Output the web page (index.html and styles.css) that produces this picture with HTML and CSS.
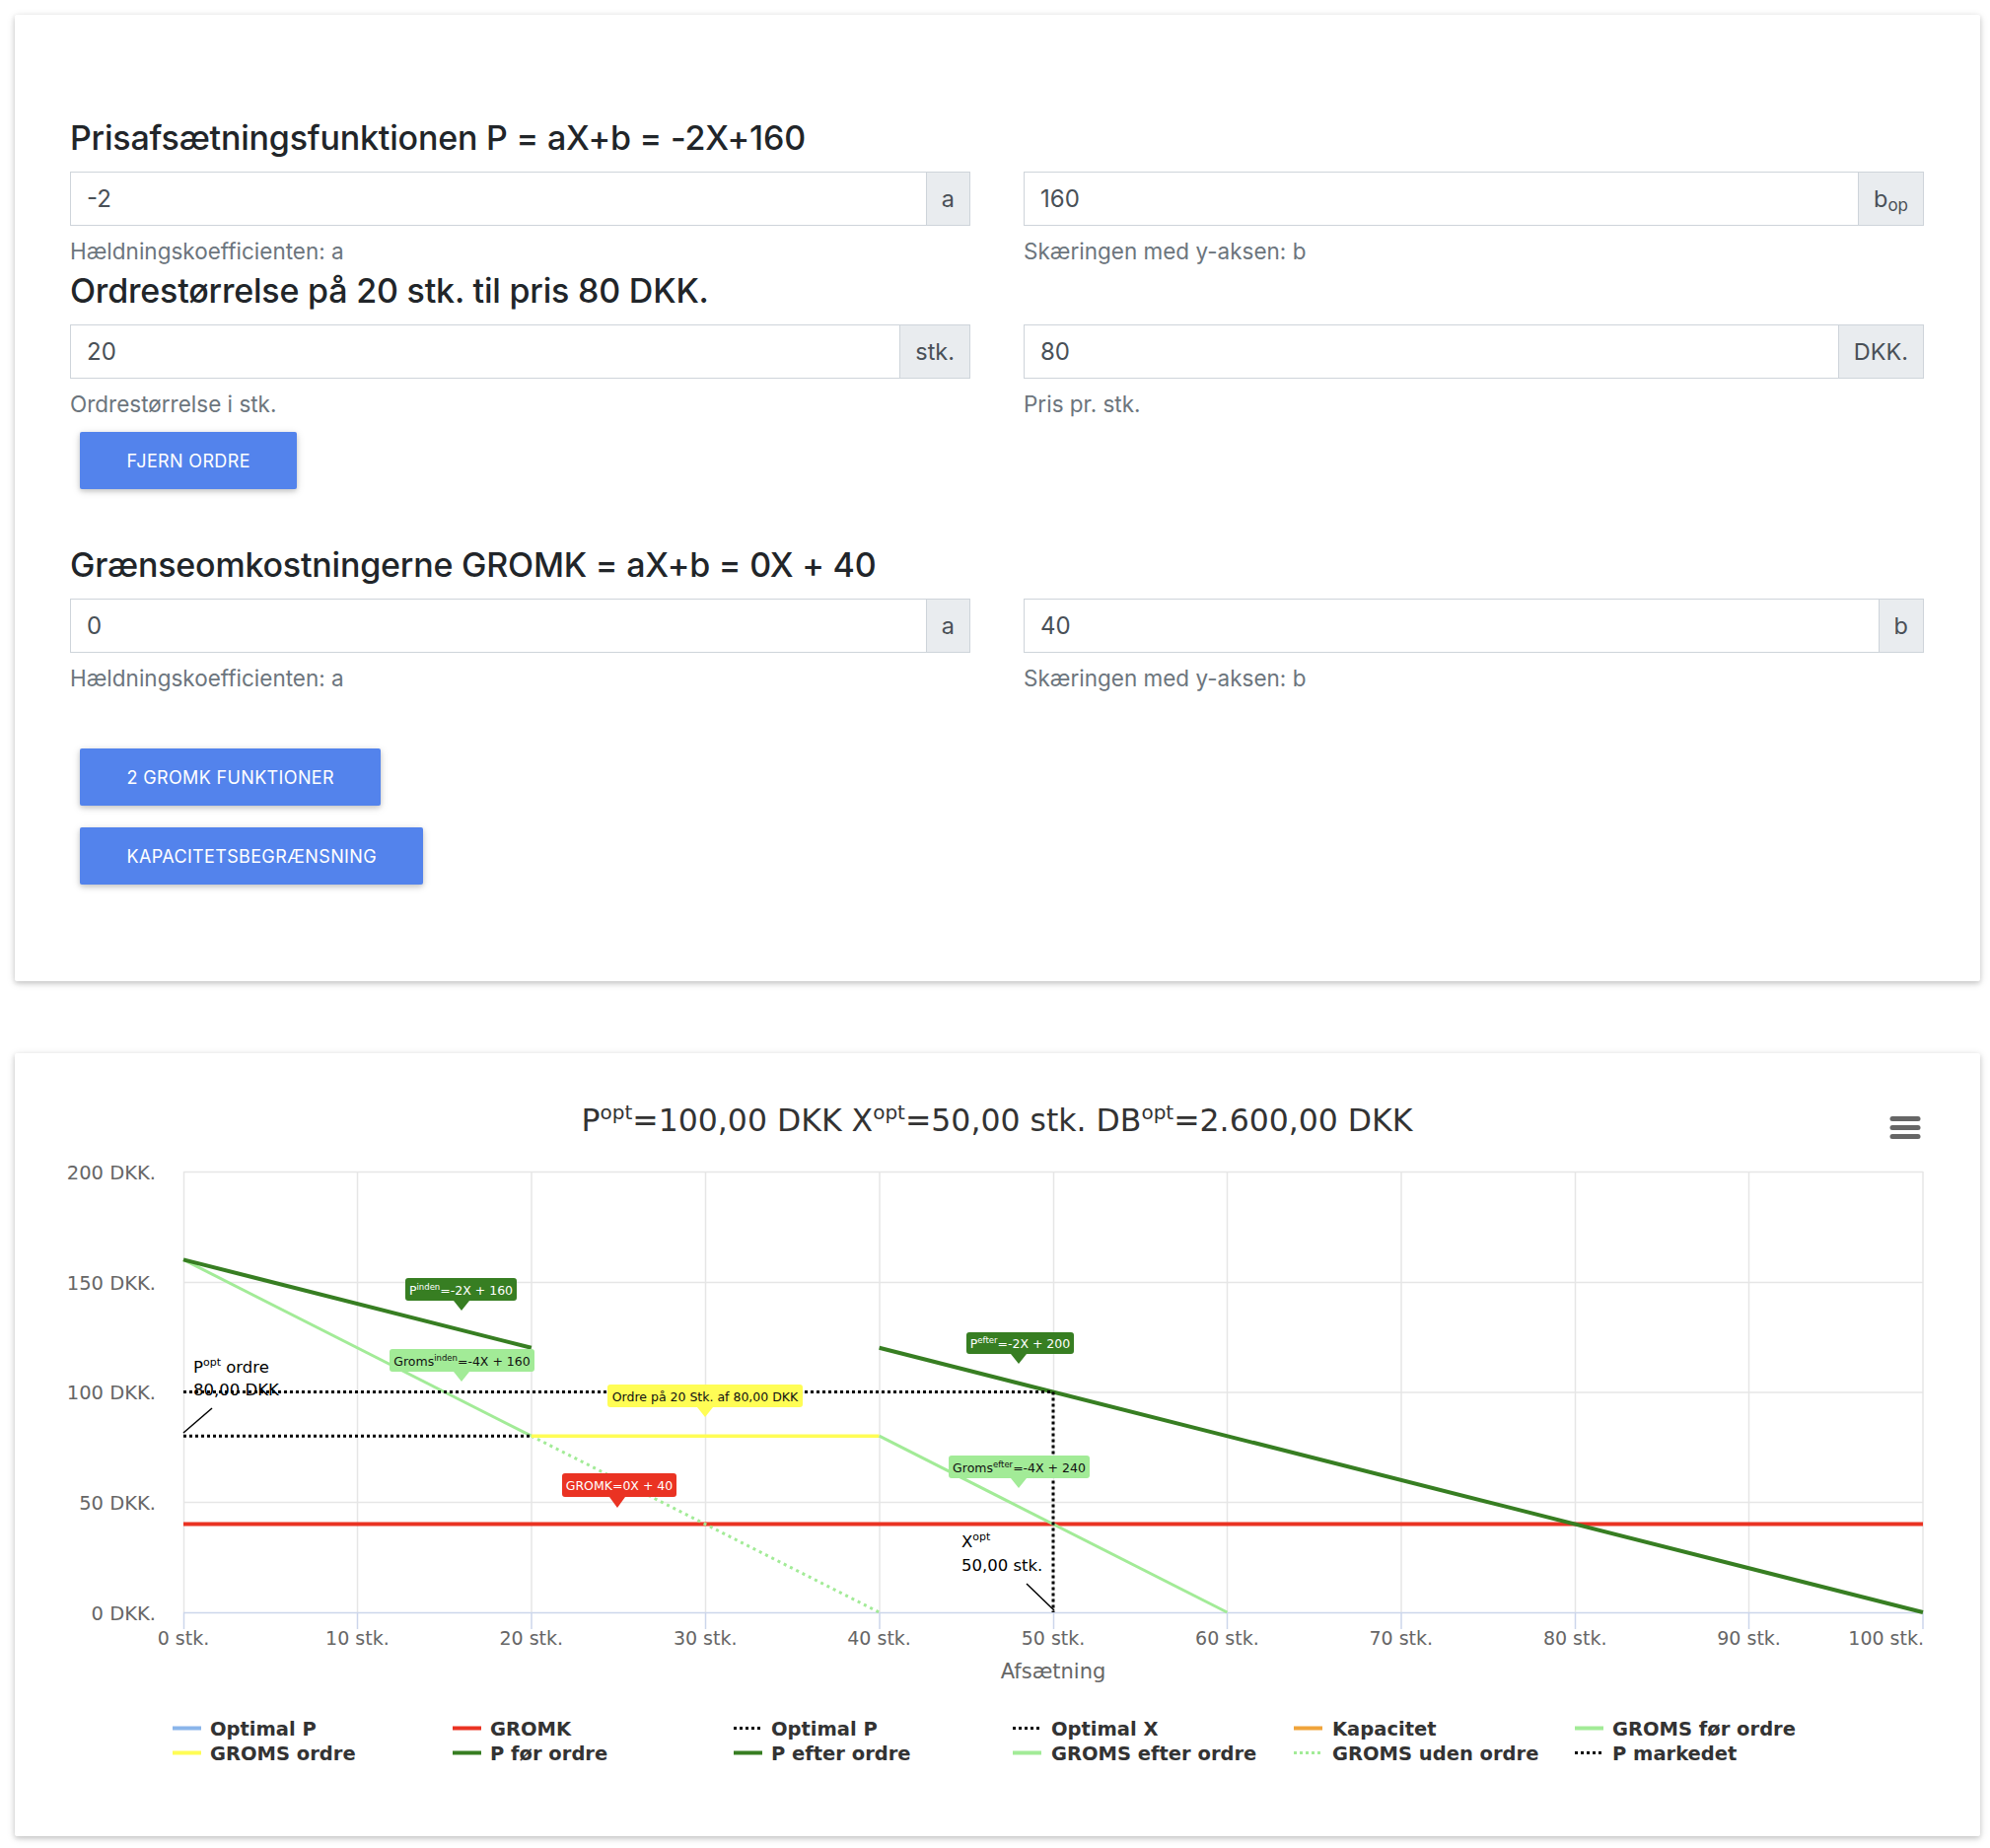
FILE: index.html
```html
<!DOCTYPE html>
<html lang="da">
<head>
<meta charset="utf-8">
<title>Prisafsætning</title>
<link rel="stylesheet" href="styles.css">
</head>
<body>
<main class="page">
  <section class="card form-card">
    <h4 class="heading">Prisafsætningsfunktionen P = aX+b = -2X+160</h4>
    <div class="row">
      <div class="field">
        <div class="input-group"><input class="control" value="-2"><span class="addon">a</span></div>
        <small class="help">Hældningskoefficienten: a</small>
      </div>
      <div class="field">
        <div class="input-group"><input class="control" value="160"><span class="addon">b<sub>op</sub></span></div>
        <small class="help">Skæringen med y-aksen: b</small>
      </div>
    </div>

    <h4 class="heading heading-tight">Ordrestørrelse på 20 stk. til pris 80 DKK.</h4>
    <div class="row">
      <div class="field">
        <div class="input-group"><input class="control" value="20"><span class="addon">stk.</span></div>
        <small class="help">Ordrestørrelse i stk.</small>
      </div>
      <div class="field">
        <div class="input-group"><input class="control" value="80"><span class="addon">DKK.</span></div>
        <small class="help">Pris pr. stk.</small>
      </div>
    </div>
    <div class="btn-row first-btn"><button class="btn">Fjern ordre</button></div>

    <h4 class="heading heading-gap">Grænseomkostningerne GROMK = aX+b = 0X + 40</h4>
    <div class="row">
      <div class="field">
        <div class="input-group"><input class="control" value="0"><span class="addon">a</span></div>
        <small class="help">Hældningskoefficienten: a</small>
      </div>
      <div class="field">
        <div class="input-group"><input class="control" value="40"><span class="addon">b</span></div>
        <small class="help">Skæringen med y-aksen: b</small>
      </div>
    </div>
    <div class="btn-stack">
      <button class="btn">2 GROMK funktioner</button>
      <button class="btn">Kapacitetsbegrænsning</button>
    </div>
  </section>

  <section class="card chart-card">
    <svg class="chart" width="1993" height="794" viewBox="0 0 1993 794" xmlns="http://www.w3.org/2000/svg">
      <!-- title -->
      <text class="title" x="996" y="79" text-anchor="middle">P<tspan class="sup" dy="-12">opt</tspan><tspan dy="12">=100,00 DKK X</tspan><tspan class="sup" dy="-12">opt</tspan><tspan dy="12">=50,00 stk. DB</tspan><tspan class="sup" dy="-12">opt</tspan><tspan dy="12">=2.600,00 DKK</tspan></text>
      <!-- menu -->
      <g class="menu">
        <line x1="1904" y1="66.5" x2="1930" y2="66.5"/>
        <line x1="1904" y1="75.5" x2="1930" y2="75.5"/>
        <line x1="1904" y1="84.5" x2="1930" y2="84.5"/>
      </g>
      <!-- grid -->
      <g class="grid">
        <line x1="171" y1="120.5" x2="1935" y2="120.5"/>
        <line x1="171" y1="232.5" x2="1935" y2="232.5"/>
        <line x1="171" y1="344" x2="1935" y2="344"/>
        <line x1="171" y1="455.5" x2="1935" y2="455.5"/>
        <line x1="171.5" y1="120" x2="171.5" y2="567"/>
        <line x1="347.5" y1="120" x2="347.5" y2="567"/>
        <line x1="524" y1="120" x2="524" y2="567"/>
        <line x1="700.5" y1="120" x2="700.5" y2="567"/>
        <line x1="877" y1="120" x2="877" y2="567"/>
        <line x1="1053.5" y1="120" x2="1053.5" y2="567"/>
        <line x1="1229.5" y1="120" x2="1229.5" y2="567"/>
        <line x1="1406" y1="120" x2="1406" y2="567"/>
        <line x1="1582.5" y1="120" x2="1582.5" y2="567"/>
        <line x1="1758.5" y1="120" x2="1758.5" y2="567"/>
        <line x1="1935" y1="120" x2="1935" y2="567"/>
      </g>
      <g class="axis">
        <line x1="171" y1="567.5" x2="1935" y2="567.5"/>
        <line x1="171.5" y1="567" x2="171.5" y2="584"/>
        <line x1="347.5" y1="567" x2="347.5" y2="584"/>
        <line x1="524" y1="567" x2="524" y2="584"/>
        <line x1="700.5" y1="567" x2="700.5" y2="584"/>
        <line x1="877" y1="567" x2="877" y2="584"/>
        <line x1="1053.5" y1="567" x2="1053.5" y2="584"/>
        <line x1="1229.5" y1="567" x2="1229.5" y2="584"/>
        <line x1="1406" y1="567" x2="1406" y2="584"/>
        <line x1="1582.5" y1="567" x2="1582.5" y2="584"/>
        <line x1="1758.5" y1="567" x2="1758.5" y2="584"/>
        <line x1="1935" y1="567" x2="1935" y2="584"/>
      </g>
      <g class="ylabels">
        <text x="143" y="128">200 DKK.</text>
        <text x="143" y="240">150 DKK.</text>
        <text x="143" y="351">100 DKK.</text>
        <text x="143" y="463">50 DKK.</text>
        <text x="143" y="575">0 DKK.</text>
      </g>
      <g class="xlabels">
        <text x="171" y="600">0 stk.</text>
        <text x="347.4" y="600">10 stk.</text>
        <text x="523.8" y="600">20 stk.</text>
        <text x="700.2" y="600">30 stk.</text>
        <text x="876.6" y="600">40 stk.</text>
        <text x="1053" y="600">50 stk.</text>
        <text x="1229.4" y="600">60 stk.</text>
        <text x="1405.8" y="600">70 stk.</text>
        <text x="1582.2" y="600">80 stk.</text>
        <text x="1758.6" y="600">90 stk.</text>
        <text x="1936" y="600" text-anchor="end">100 stk.</text>
      </g>
      <text class="axis-title" x="1053" y="634" text-anchor="middle">Afsætning</text>

      <!-- series -->
      <line class="s-red" x1="171" y1="477.6" x2="1935" y2="477.6"/>
      <line class="s-lg" x1="171" y1="209.4" x2="523.8" y2="388.2"/>
      <line class="s-lg-dot" x1="523.8" y1="388.2" x2="876.6" y2="567"/>
      <line class="s-yellow" x1="523.8" y1="388.2" x2="876.6" y2="388.2"/>
      <line class="s-lg" x1="876.6" y1="388.2" x2="1229.4" y2="567"/>
      <line class="s-green" x1="171" y1="209.4" x2="523.8" y2="298.8"/>
      <line class="s-green" x1="876.6" y1="298.8" x2="1935" y2="567"/>
      <line class="s-dot" x1="171" y1="343.5" x2="1053" y2="343.5"/>
      <line class="s-dot" x1="1053" y1="343.5" x2="1053" y2="567"/>
      <line class="s-dot" x1="171" y1="388.2" x2="523.8" y2="388.2"/>

      <!-- callouts -->
      <g class="callout c-green">
        <path d="M399 228 H506 Q509 228 509 231 V248 Q509 251 506 251 H461 L453 261 L445 251 H399 Q396 251 396 248 V231 Q396 228 399 228 Z"/>
        <text x="452.5" y="244.5">P<tspan class="csup" dy="-5">inden</tspan><tspan dy="5">=-2X + 160</tspan></text>
      </g>
      <g class="callout c-light">
        <path d="M383 300 H524 Q527 300 527 303 V320 Q527 323 524 323 H461 L453 333 L445 323 H383 Q380 323 380 320 V303 Q380 300 383 300 Z"/>
        <text x="453.5" y="316.5">Groms<tspan class="csup" dy="-5">inden</tspan><tspan dy="5">=-4X + 160</tspan></text>
      </g>
      <g class="callout c-yellow">
        <path d="M604 336 H796 Q799 336 799 339 V356 Q799 359 796 359 H708 L700 369 L692 359 H604 Q601 359 601 356 V339 Q601 336 604 336 Z"/>
        <text x="700" y="352.5">Ordre på 20 Stk. af 80,00 DKK</text>
      </g>
      <g class="callout c-red">
        <path d="M558 426 H668 Q671 426 671 429 V447 Q671 450 668 450 H619 L611 461 L603 450 H558 Q555 450 555 447 V429 Q555 426 558 426 Z"/>
        <text x="613" y="443">GROMK=0X + 40</text>
      </g>
      <g class="callout c-green">
        <path d="M968 283 H1071 Q1074 283 1074 286 V302 Q1074 305 1071 305 H1026 L1018 315 L1010 305 H968 Q965 305 965 302 V286 Q965 283 968 283 Z"/>
        <text x="1019.5" y="299">P<tspan class="csup" dy="-5">efter</tspan><tspan dy="5">=-2X + 200</tspan></text>
      </g>
      <g class="callout c-light">
        <path d="M950 408 H1087 Q1090 408 1090 411 V428 Q1090 431 1087 431 H1026 L1018 441 L1010 431 H950 Q947 431 947 428 V411 Q947 408 950 408 Z"/>
        <text x="1018.5" y="424.5">Groms<tspan class="csup" dy="-5">efter</tspan><tspan dy="5">=-4X + 240</tspan></text>
      </g>

      <!-- free annotations -->
      <g class="note">
        <text x="181" y="324">P<tspan class="nsup" dy="-7">opt</tspan><tspan dy="7"> ordre</tspan></text>
        <text x="181" y="347">80,00 DKK</text>
        <line x1="171" y1="385" x2="200" y2="360"/>
        <text x="960" y="501">X<tspan class="nsup" dy="-7">opt</tspan></text>
        <text x="960" y="525">50,00 stk.</text>
        <line x1="1026" y1="538" x2="1054" y2="565"/>
      </g>

      <!-- legend -->
      <g class="legend">
        <line class="l-blue" x1="160" y1="684.5" x2="189" y2="684.5"/>
        <text x="198" y="691.5">Optimal P</text>
        <line class="l-red" x1="444" y1="684.5" x2="473" y2="684.5"/>
        <text x="482" y="691.5">GROMK</text>
        <line class="l-dot" x1="729" y1="684.5" x2="756" y2="684.5"/>
        <text x="767" y="691.5">Optimal P</text>
        <line class="l-dot" x1="1012" y1="684.5" x2="1039" y2="684.5"/>
        <text x="1051" y="691.5">Optimal X</text>
        <line class="l-orange" x1="1297" y1="684.5" x2="1326" y2="684.5"/>
        <text x="1336" y="691.5">Kapacitet</text>
        <line class="l-lg" x1="1582" y1="684.5" x2="1611" y2="684.5"/>
        <text x="1620" y="691.5">GROMS før ordre</text>

        <line class="l-yellow" x1="160" y1="709.5" x2="189" y2="709.5"/>
        <text x="198" y="716.5">GROMS ordre</text>
        <line class="l-green" x1="444" y1="709.5" x2="473" y2="709.5"/>
        <text x="482" y="716.5">P før ordre</text>
        <line class="l-green" x1="729" y1="709.5" x2="758" y2="709.5"/>
        <text x="767" y="716.5">P efter ordre</text>
        <line class="l-lg" x1="1012" y1="709.5" x2="1041" y2="709.5"/>
        <text x="1051" y="716.5">GROMS efter ordre</text>
        <line class="l-lgdot" x1="1297" y1="709.5" x2="1324" y2="709.5"/>
        <text x="1336" y="716.5">GROMS uden ordre</text>
        <line class="l-dot" x1="1582" y1="709.5" x2="1609" y2="709.5"/>
        <text x="1620" y="716.5">P markedet</text>
      </g>
    </svg>
  </section>
</main>
</body>
</html>
```
FILE: styles.css
```css
* { box-sizing: border-box; }

html, body {
  margin: 0;
  background: #ffffff;
}

body {
  font-family: "Inter", "Liberation Sans", sans-serif;
  color: #212529;
}

.page {
  padding: 15px 10px 12px 15px;
  display: flex;
  flex-direction: column;
  gap: 73px;
}

.card {
  width: 1993px;
  background: #fff;
  border-radius: 2px;
  box-shadow: 0 2px 5px 0 rgba(0, 0, 0, 0.16), 0 2px 10px 0 rgba(0, 0, 0, 0.12);
}

.form-card {
  height: 980px;
  padding: 104px 57px 0 56px;
}

.heading {
  margin: 0 0 14px;
  font-size: 34px;
  line-height: 41px;
  font-weight: 500;
  color: #212529;
  letter-spacing: -0.2px;
}

.heading-tight { margin-top: 4px; }
.heading-gap { margin-top: 56px; }

.row {
  display: grid;
  grid-template-columns: 1fr 1fr;
  column-gap: 54px;
}

.field {
  display: flex;
  flex-direction: column;
}

.input-group {
  display: flex;
  height: 55px;
}

.control {
  flex: 1;
  min-width: 0;
  height: 55px;
  margin: 0;
  padding: 0 16px;
  border: 1px solid #ced4da;
  border-radius: 0;
  font-family: "Inter", "Liberation Sans", sans-serif;
  font-size: 24px;
  color: #495057;
  background: #fff;
  outline: none;
}

.addon {
  display: flex;
  align-items: center;
  padding: 0 15px;
  margin-left: -1px;
  background: #e9ecef;
  border: 1px solid #ced4da;
  font-size: 23.5px;
  color: #495057;
}

.addon sub {
  font-size: 17px;
  line-height: 1;
  position: relative;
  top: 7px;
  vertical-align: baseline;
}

.help {
  display: block;
  margin-top: 10px;
  font-size: 22.5px;
  line-height: 31px;
  color: #6c757d;
}

.btn-row { display: flex; }
.first-btn { margin-top: 13px; }

.btn {
  height: 58px;
  margin: 0 10px;
  padding: 0 47.5px;
  border: 0;
  border-radius: 2px;
  background: #5383ec;
  color: #fff;
  font-family: "Inter", "Liberation Sans", sans-serif;
  font-size: 18px;
  font-weight: 400;
  letter-spacing: 0.35px;
  text-transform: uppercase;
  box-shadow: 0 2px 5px 0 rgba(0, 0, 0, 0.16), 0 2px 10px 0 rgba(0, 0, 0, 0.12);
}

.btn-stack {
  margin-top: 56px;
  display: flex;
  flex-direction: column;
  align-items: flex-start;
  gap: 22px;
}

.chart-card {
  height: 794px;
}

.chart {
  display: block;
  font-family: "DejaVu Sans", "Liberation Sans", sans-serif;
}

.title { font-size: 31.5px; fill: #333; }
.title .sup { font-size: 20px; }

.menu line { stroke: #666; stroke-width: 5; stroke-linecap: round; }

.grid line { stroke: #e6e6e6; stroke-width: 1.5; }
.axis line { stroke: #ccd6eb; stroke-width: 1.5; }

.ylabels text { font-size: 19.5px; fill: #666; text-anchor: end; }
.xlabels text { font-size: 19px; fill: #666; text-anchor: middle; }
.xlabels text:last-child { text-anchor: end; }
.axis-title { font-size: 21px; fill: #666; }

.s-red { stroke: #ea3323; stroke-width: 4; }
.s-green { stroke: #377e22; stroke-width: 4; }
.s-lg { stroke: #a2eb97; stroke-width: 3; }
.s-lg-dot { stroke: #a2eb97; stroke-width: 3; stroke-dasharray: 3 4; }
.s-yellow { stroke: #fffd55; stroke-width: 3.5; }
.s-dot { stroke: #000; stroke-width: 3; stroke-dasharray: 3 3; }

.callout text { font-size: 12.5px; text-anchor: middle; }
.callout .csup { font-size: 8.5px; }
.c-green path { fill: #377e22; }
.c-green text { fill: #fff; }
.c-light path { fill: #a2eb97; }
.c-light text { fill: #111; }
.c-yellow path { fill: #fffd55; }
.c-yellow text { fill: #111; }
.c-red path { fill: #ea3323; }
.c-red text { fill: #fff; }

.note text { font-size: 16.5px; fill: #000; }
.note .nsup { font-size: 11px; }
.note line { stroke: #000; stroke-width: 1.5; }

.legend text { font-size: 19.5px; font-weight: 700; fill: #333; }
.legend line { stroke-width: 4; }
.l-blue { stroke: #8ab5ea; }
.l-red { stroke: #ea3323; }
.l-orange { stroke: #f0a43b; }
.l-lg { stroke: #a2eb97; }
.l-yellow { stroke: #fffd55; }
.l-green { stroke: #377e22; }
.l-dot { stroke: #000; stroke-width: 3 !important; stroke-dasharray: 3 3; }
.l-lgdot { stroke: #a2eb97; stroke-width: 3 !important; stroke-dasharray: 3 3; }
```
